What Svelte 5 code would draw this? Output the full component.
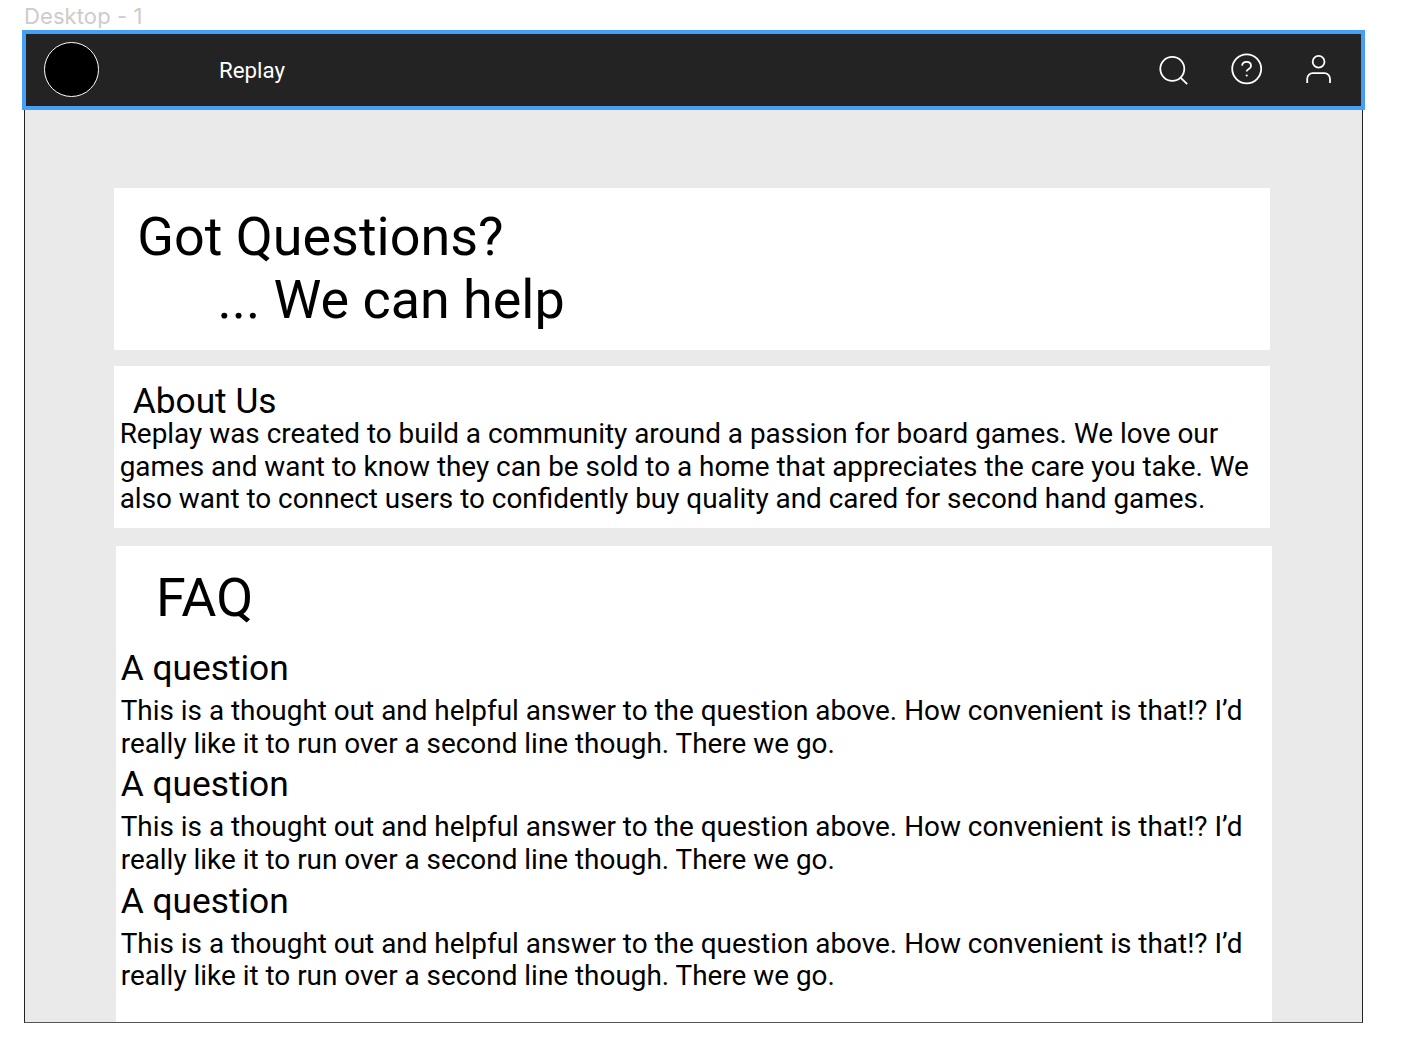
<script>
  const faqs = [1, 2, 3].map((id) => ({
    id,
    question: 'A question',
    lines: [
      'This is a thought out and helpful answer to the question above. How convenient is that!? I’d',
      'really like it to run over a second line though. There we go.'
    ]
  }));
  const about = [
    'Replay was created to build a community around a passion for board games. We love our',
    'games and want to know they can be sold to a home that appreciates the care you take. We',
    'also want to connect users to confidently buy quality and cared for second hand games.'
  ];
</script>

<div class="canvas">
  <div class="frame-label">Desktop - 1</div>
  <nav class="navbar">
    <div class="logo"></div>
    <span class="brand">Replay</span>
    <div class="actions">
      <svg width="32" height="32" viewBox="0 0 32 32">
        <circle cx="14.3" cy="15.8" r="12" />
        <path d="M22.8 24.8 29.2 31.2" />
      </svg>
      <svg width="32" height="32" viewBox="0 0 32 32">
        <circle cx="15.7" cy="15.8" r="14.5" />
        <path d="M11.1 12.6C11.3 10.4 13.1 8.9 15.5 8.9c2.6 0 4.5 1.6 4.5 4 0 3.4-4.4 3.2-4.4 5.5" />
        <circle class="dot" cx="15.7" cy="22.5" r="1.1" />
      </svg>
      <svg width="32" height="32" viewBox="0 0 32 32">
        <circle cx="15.6" cy="8.7" r="5.9" />
        <path d="M4.2 30v-4.3a5.5 5.5 0 0 1 5.5-5.5h11.8a5.5 5.5 0 0 1 5.5 5.5V30" />
      </svg>
    </div>
  </nav>

  <main class="page">
    <section class="card hero">
      <h1>Got Questions?</h1>
      <h1 class="indent">... We can help</h1>
    </section>
    <section class="card about">
      <h2>About Us</h2>
      {#each about as line}
        <p>{line}</p>
      {/each}
    </section>
    <section class="card faq">
      <h1>FAQ</h1>
      {#each faqs as item (item.id)}
        <article>
          <h2>{item.question}</h2>
          {#each item.lines as line}
            <p>{line}</p>
          {/each}
        </article>
      {/each}
    </section>
  </main>
</div>

<style>
  :global(body) {
    margin: 0;
    background: #fff;
  }
  .canvas {
    box-sizing: border-box;
    width: 1406px;
    height: 1060px;
    padding: 0 41px 0 22px;
    overflow: hidden;
    font-family: Roboto, sans-serif;
    color: #000;
  }
  .frame-label {
    height: 30px;
    padding-left: 2px;
    font: 22px/33px Inter, sans-serif;
    letter-spacing: 0.1px;
    color: #ccc;
  }
  .navbar {
    box-sizing: border-box;
    height: 80px;
    border: 4px solid #459ff5;
    background: #232323;
    display: flex;
    align-items: center;
    padding: 0 26px 2px 18px;
  }
  .logo {
    box-sizing: border-box;
    width: 55px;
    height: 55px;
    border: 1px solid #fff;
    border-radius: 50%;
    background: #000;
  }
  .brand {
    margin: 2px 0 0 120px;
    font-size: 22.3px;
    line-height: 26px;
    color: #fff;
  }
  .actions {
    display: flex;
    gap: 40.5px;
    margin-left: auto;
  }
  .actions svg {
    display: block;
    overflow: visible;
    fill: none;
    stroke: #fff;
    stroke-width: 1.8;
  }
  .actions .dot {
    fill: #fff;
    stroke: none;
  }
  .page {
    box-sizing: border-box;
    width: 1339px;
    height: 913px;
    margin-left: 2px;
    padding: 78px 0 0 89px;
    border: 1px solid #222;
    border-top: 0;
    border-bottom-color: #555;
    background: #eaeaea;
    overflow: hidden;
  }
  .card {
    box-sizing: border-box;
    width: 1156px;
    background: #fff;
    white-space: nowrap;
  }
  h1,
  h2,
  p {
    margin: 0;
    font-weight: 400;
  }
  h1 {
    font-size: 53.9px;
    line-height: 63px;
  }
  h2 {
    font-size: 35.3px;
    line-height: 42px;
  }
  p {
    font-size: 27.9px;
    line-height: 32.6px;
  }
  .hero {
    height: 162px;
    padding: 17px 23.3px;
  }
  .hero .indent {
    padding-left: 80.2px;
  }
  .about {
    height: 162px;
    margin-top: 16px;
    padding: 18px 5.7px 0;
  }
  .about h2 {
    padding-left: 13px;
    line-height: 34px;
  }
  .faq {
    height: 480px;
    margin: 18px 0 0 2px;
    padding: 20px 4.7px;
  }
  .faq h1 {
    padding-left: 35.3px;
    margin-bottom: 18px;
  }
  article {
    height: 116.3px;
  }
  article h2 {
    margin-bottom: 6px;
  }
</style>
